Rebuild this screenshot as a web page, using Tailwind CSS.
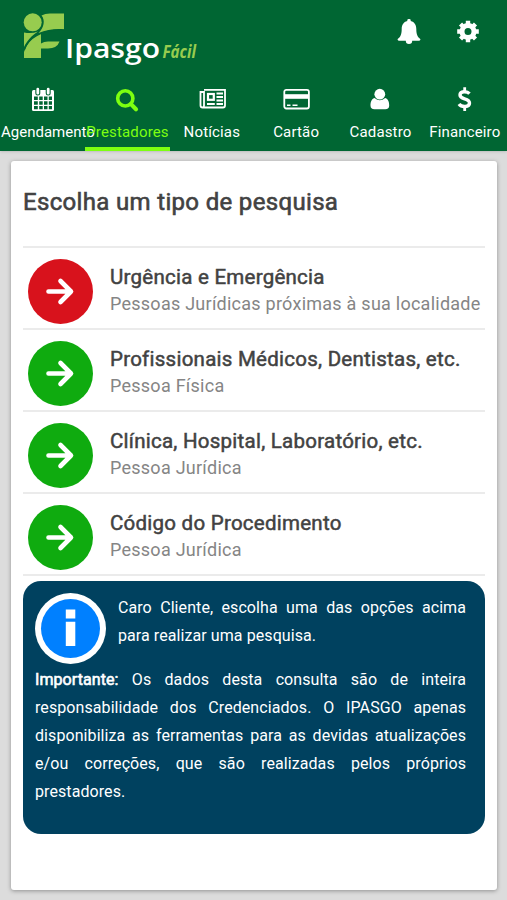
<!DOCTYPE html>
<html lang="pt-BR">
<head>
    <meta charset="UTF-8">
    <meta name="viewport" content="width=device-width, initial-scale=1.0">
    <title>Ipasgo Fácil</title>
    <script src="https://cdn.jsdelivr.net/npm/@tailwindcss/browser@4"></script>
</head>
<body class="h-[900px] flex flex-col bg-[#dcdcdc] font-[Roboto,sans-serif] text-[#424242] overflow-hidden">

    <!-- Header Section -->
    <header class="h-[151px] shrink-0 bg-[#006633] text-white shadow-sm">
        <div class="h-[76px] flex justify-between">
            <!-- Logo -->
            <svg class="w-[200px] h-[76px] shrink-0" viewBox="0 0 200 76">
                <g fill="#97cc4f">
                    <circle cx="32.7" cy="22.3" r="9"/>
                    <path d="M41.500 15.500Q45 13.500 50 13.500H64V29.200C55 28.500 47 29.500 38.500 33C44 28 45.500 20 41.500 15.500Z"/>
                    <path d="M24 32.500Q32 34 38 31.500C31 36 27 41 24 47Z"/>
                    <path d="M24 58V52C27 43 32 37 41 33.500V58Z"/>
                    <path d="M41 48.500V43.500Q44 41.500 48 41.500H59.500Q57 48.500 48 48.500Z"/>
                </g>
                <path d="M24.300 50C28 38 41 29.500 64 30.200" fill="none" stroke="#006633" stroke-width="1.300"/>
                <text x="65" y="58" textLength="95" lengthAdjust="spacingAndGlyphs" font-family="Open Sans" font-size="27" font-weight="600" fill="#fff">Ipasgo</text>
                <text x="162.500" y="58" textLength="33.500" lengthAdjust="spacingAndGlyphs" font-family="Open Sans" font-size="17" font-weight="700" font-style="italic" fill="#97cc4f">Fácil</text>
            </svg>
            <div class="flex gap-9 pt-[19px] pr-[27px]">
                <svg class="w-6 h-[26px]" viewBox="0 0 24 26" fill="#fff">
                    <path d="M12 0a1.700 1.700 0 0 1 1.700 2C17.600 3 19.300 6 19.300 10C19.300 15.500 20.500 18 23.500 20.200Q23.300 21.700 21.700 21.700H15.200A3.200 3.200 0 0 1 8.800 21.700H2.300Q.7 21.700 .5 20.200C3.500 18 4.700 15.500 4.700 10C4.700 6 6.400 3 10.300 2A1.700 1.700 0 0 1 12 0Z"/>
                </svg>
                <svg class="w-[23px] h-[26px]" viewBox="0 0 23 26" fill="none" stroke="#fff">
                    <circle cx="11" cy="12.500" r="6" stroke-width="5"/>
                    <g stroke-width="4.400">
                        <path d="M11 1.800V5M11 20V23.200M.2 12.500H4M18 12.500H21.800"/>
                        <path d="M3.500 5L6 7.500M16 17.500L18.500 20M3.500 20L6 17.500M16 7.500L18.500 5"/>
                    </g>
                </svg>
            </div>
        </div>

        <!-- Tabs -->
        <nav class="h-[75px] pl-px grid grid-cols-6 text-[15px] tracking-[0.15px] leading-5 whitespace-nowrap">
            <div class="flex flex-col items-center pt-[9px]">
                <svg class="w-7 h-7 mb-[9px]" viewBox="0 0 28 28">
                    <rect x="3" y="5" width="22" height="21" rx="1.500" fill="#fff"/>
                    <path d="M5 11.500h3.800v3.500H5zM10.200 11.500h3.500v3.500h-3.500zM15 11.500h3.500v3.500H15zM19.800 11.500H23v3.500h-3.200zM5 16.200h3.800v3.500H5zM10.200 16.200h3.500v3.500h-3.500zM15 16.200h3.500v3.500H15zM19.800 16.200H23v3.500h-3.200zM5 21h3.800v3.300H5zM10.200 21h3.500v3.300h-3.500zM15 21h3.500v3.300H15zM19.800 21H23v3.300h-3.200z" fill="#006633"/>
                    <path d="M8.800 4.500v3.500M19.200 4.500v3.500" stroke="#006633" stroke-width="5" stroke-linecap="round"/>
                    <path d="M8.800 4.200v4M19.200 4.200v4" stroke="#fff" stroke-width="2.800" stroke-linecap="round"/>
                </svg>
                <span class="self-start tracking-normal">Agendamento</span>
            </div>
            <div class="flex flex-col items-center pt-[9px] border-b-4 border-[#7dff10] text-[#7dff10]">
                <svg class="w-7 h-7 mb-[9px]" viewBox="0 0 28 28" fill="none" stroke="currentColor">
                    <circle cx="12.300" cy="13.400" r="7.600" stroke-width="3.600"/>
                    <path d="M18 19.100L23 24.200" stroke-width="4.200" stroke-linecap="round"/>
                </svg>
                <span>Prestadores</span>
            </div>
            <div class="flex flex-col items-center pt-[9px]">
                <svg class="w-7 h-7 mb-[9px]" viewBox="0 0 28 28" fill="none" stroke="#fff" stroke-width="1.800">
                    <path d="M6 4.800H27V20.500Q27 22.500 25 22.500H4.500Q2.500 22.500 2.500 20.500V7H6V20.500Q6 22.500 4.500 22.500"/>
                    <rect x="10" y="9" width="5.800" height="5.800" stroke-width="2.200"/>
                    <path d="M18.500 8.500H25M18.500 12H25M18.500 15.500H25M9 19H16.800M18.500 19H25"/>
                </svg>
                <span>Notícias</span>
            </div>
            <div class="flex flex-col items-center pt-[9px]">
                <svg class="w-7 h-7 mb-[9px]" viewBox="0 0 28 28" fill="none" stroke="#fff">
                    <rect x="2.300" y="4.800" width="24.600" height="18.700" rx="2" stroke-width="1.800"/>
                    <path d="M2.300 11.500H26.900" stroke-width="4.600"/>
                    <path d="M5 20.300H8.500M10.500 20.300H15.500" stroke-width="1.500"/>
                </svg>
                <span>Cartão</span>
            </div>
            <div class="flex flex-col items-center pt-[9px]">
                <svg class="w-7 h-7 mb-[9px]" viewBox="0 0 28 28" fill="#fff">
                    <path d="M8.500 13C5 14 4.500 18 4.500 20.500Q4.500 24.300 8.500 24.300H19.200Q23.200 24.300 23.200 20.500C23.200 18 22.700 14 19.200 13Q13.800 17.500 8.500 13Z"/>
                    <circle cx="13.800" cy="9.200" r="5.400"/>
                </svg>
                <span>Cadastro</span>
            </div>
            <div class="flex flex-col items-center pt-[9px]">
                <svg class="w-7 h-7 mb-[9px]" viewBox="0 0 28 28" fill="none" stroke="#fff">
                    <path d="M18.500 8.700C16 6 9 5.800 9 10C9 15 18.500 12.500 18.500 18C18.500 22.500 10.500 22.500 8 19" stroke-width="3.400"/>
                    <path d="M13.700 2.200V6.500M13.700 21V26" stroke-width="2.800"/>
                </svg>
                <span>Financeiro</span>
            </div>
        </nav>
    </header>

    <!-- Main Content -->
    <main class="h-[729px] mt-[10px] ml-[11px] mr-[10px] px-3 bg-white rounded-[3px] shadow-[0_1px_4px_rgba(0,0,0,0.35)]">
        <h1 class="h-[85px] pt-6 text-2xl leading-[34px] tracking-[0.33px] [-webkit-text-stroke:0.6px]">Escolha um tipo de pesquisa</h1>

        <ul class="border-t-2 border-[#ebebeb]">
            <li class="h-[82px] flex gap-[17px] pl-[5px] border-b-2 border-[#ebebeb]">
                <svg class="size-[65px] mt-[11px] shrink-0" viewBox="0 0 65 65">
                    <circle cx="32.500" cy="32.500" r="32.500" fill="#d8121c"/>
                    <path d="M20.500 32.500H43M32.500 22L43 32.500L32.500 43" fill="none" stroke="#fff" stroke-width="4.600" stroke-linecap="round" stroke-linejoin="round"/>
                </svg>
                <div class="pt-4 whitespace-nowrap tracking-[0.25px]">
                    <h2 class="text-[20.500px] leading-[27px] [-webkit-text-stroke:0.5px]">Urgência e Emergência</h2>
                    <p class="text-[18px] leading-[26px] text-[#858585]">Pessoas Jurídicas próximas à sua localidade</p>
                </div>
            </li>
            <li class="h-[82px] flex gap-[17px] pl-[5px] border-b-2 border-[#ebebeb]">
                <svg class="size-[65px] mt-[11px] shrink-0" viewBox="0 0 65 65">
                    <circle cx="32.500" cy="32.500" r="32.500" fill="#0fab0f"/>
                    <path d="M20.500 32.500H43M32.500 22L43 32.500L32.500 43" fill="none" stroke="#fff" stroke-width="4.600" stroke-linecap="round" stroke-linejoin="round"/>
                </svg>
                <div class="pt-4 whitespace-nowrap tracking-[0.25px]">
                    <h2 class="text-[20.500px] leading-[27px] [-webkit-text-stroke:0.5px]">Profissionais Médicos, Dentistas, etc.</h2>
                    <p class="text-[18px] leading-[26px] text-[#858585]">Pessoa Física</p>
                </div>
            </li>
            <li class="h-[82px] flex gap-[17px] pl-[5px] border-b-2 border-[#ebebeb]">
                <svg class="size-[65px] mt-[11px] shrink-0" viewBox="0 0 65 65">
                    <circle cx="32.500" cy="32.500" r="32.500" fill="#0fab0f"/>
                    <path d="M20.500 32.500H43M32.500 22L43 32.500L32.500 43" fill="none" stroke="#fff" stroke-width="4.600" stroke-linecap="round" stroke-linejoin="round"/>
                </svg>
                <div class="pt-4 whitespace-nowrap tracking-[0.25px]">
                    <h2 class="text-[20.500px] leading-[27px] [-webkit-text-stroke:0.5px]">Clínica, Hospital, Laboratório, etc.</h2>
                    <p class="text-[18px] leading-[26px] text-[#858585]">Pessoa Jurídica</p>
                </div>
            </li>
            <li class="h-[82px] flex gap-[17px] pl-[5px] border-b-2 border-[#ebebeb]">
                <svg class="size-[65px] mt-[11px] shrink-0" viewBox="0 0 65 65">
                    <circle cx="32.500" cy="32.500" r="32.500" fill="#0fab0f"/>
                    <path d="M20.500 32.500H43M32.500 22L43 32.500L32.500 43" fill="none" stroke="#fff" stroke-width="4.600" stroke-linecap="round" stroke-linejoin="round"/>
                </svg>
                <div class="pt-4 whitespace-nowrap tracking-[0.25px]">
                    <h2 class="text-[20.500px] leading-[27px] [-webkit-text-stroke:0.5px]">Código do Procedimento</h2>
                    <p class="text-[18px] leading-[26px] text-[#858585]">Pessoa Jurídica</p>
                </div>
            </li>
        </ul>

        <!-- Info box -->
        <section class="h-[253px] w-[462px] mt-[5px] pl-3 pr-[19px] pt-3 bg-[#00415f] rounded-[18px] text-white text-[16px] leading-7 tracking-[0.08px] text-justify">
            <div class="flex gap-3">
                <svg class="size-[71px] shrink-0" viewBox="0 0 71 71">
                    <circle cx="35.500" cy="35.500" r="35.500" fill="#fff"/>
                    <circle cx="35.500" cy="35.500" r="29.500" fill="#0080ff"/>
                    <path d="M30.800 16.500h9.500v9h-9.500zM30.800 28.700h9.500V53h-9.500z" fill="#fff"/>
                </svg>
                <p class="pt-px">Caro Cliente, escolha uma das opções acima para realizar uma pesquisa.</p>
            </div>
            <p class="pt-[2px]"><b class="font-normal [-webkit-text-stroke:0.6px]">Importante:</b> Os dados desta consulta são de inteira responsabilidade dos Credenciados. O IPASGO apenas disponibiliza as ferramentas para as devidas atualizações e/ou correções, que são realizadas pelos próprios prestadores.</p>
        </section>
    </main>

</body>
</html>
